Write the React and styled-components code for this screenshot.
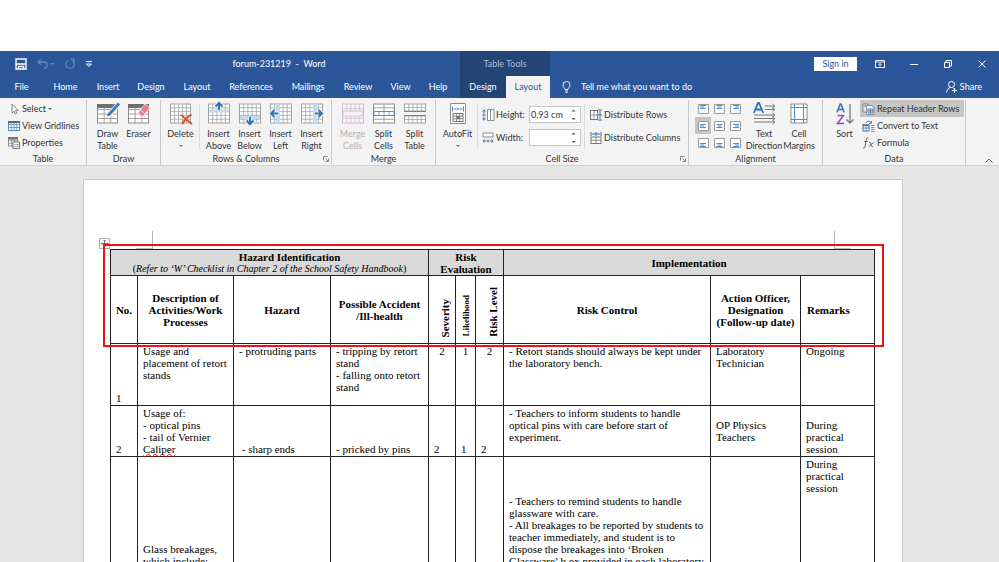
import styled, { createGlobalStyle, css } from "styled-components";

const GlobalStyle = createGlobalStyle`
  * {
    box-sizing: border-box;
  }
  body {
    margin: 0;
    background: #ffffff;
    font-family: Lato, "Open Sans", sans-serif;
    font-size: 9px;
    line-height: 12px;
    color: #333333;
  }
  button {
    border: 0;
    padding: 0;
    background: none;
    font: inherit;
    color: inherit;
    white-space: nowrap;
  }
  svg {
    display: block;
    flex: none;
    overflow: visible;
  }
`;

const Container = styled.div`
  display: flex;
  flex-direction: column;
  height: 100vh;
  padding-top: 51px;
  overflow: hidden;
`;

/* title bar and tabs */
const Bar = styled.header`
  display: grid;
  grid-template-columns: 460px 90px 1fr;
  flex: none;
  height: ${(props) => props.$height}px;
  background: #2b579a;
  color: #ffffff;
`;
const TitleLeft = styled.div`
  display: flex;
  align-items: center;
`;
const QuickAccess = styled.div`
  display: flex;
  align-items: center;
  gap: 10px;
  width: 98px;
  padding-left: 15px;
`;
const Title = styled.div`
  flex: 1;
  text-align: center;
  white-space: pre;
`;
const ContextTitle = styled.div`
  display: flex;
  align-items: center;
  justify-content: center;
  background: #244475;
  color: #a9bcda;
`;
const TitleRight = styled.div`
  display: flex;
  align-items: center;
  justify-content: flex-end;
`;
const SignIn = styled.button`
  width: 43px;
  height: 14px;
  margin-right: 6px;
  background: #ffffff;
  color: #2b579a;
`;
const WindowButton = styled.button`
  display: flex;
  align-items: center;
  justify-content: center;
  width: 34px;
  height: 24px;
`;
const Tabs = styled.nav`
  display: flex;
`;
const Tab = styled.button`
  width: ${(props) => props.$width}px;
  text-align: center;
  ${(props) =>
    props.$context &&
    css`
      background: #244475;
    `}
  ${(props) =>
    props.$active &&
    css`
      background: #f3f3f3;
      color: #2b579a;
    `}
`;
const TabsRight = styled.div`
  display: flex;
  align-items: center;
  justify-content: space-between;
  padding: 0 17px 0 12px;
`;
const BarButton = styled.button`
  display: flex;
  align-items: center;
  gap: ${(props) => props.$gap}px;
`;

/* ribbon */
const Ribbon = styled.div`
  display: flex;
  flex: none;
  height: 68px;
  padding: 2px 0 0;
  background: #f3f3f3;
  border-bottom: 1px solid #d2d2d2;
`;
const Group = styled.section`
  display: flex;
  flex-direction: column;
  justify-content: space-between;
  width: ${(props) => props.$width}px;
  border-right: 1px solid #c8c8c8;
`;
const GroupBody = styled.div`
  display: flex;
  height: 52px;
  padding-left: ${(props) => props.$left}px;
`;
const GroupLabel = styled.div`
  display: flex;
  align-items: center;
  justify-content: center;
  height: 12px;
  position: relative;
`;
const Launcher = styled.button`
  position: absolute;
  right: 2px;
  top: 3px;
`;
const BigButton = styled.button`
  display: flex;
  flex-direction: column;
  align-items: center;
  width: ${(props) => props.$width || 31}px;
  padding-top: 3px;
  line-height: 12px;
  color: ${(props) => (props.disabled ? "#b1b1b1" : "#333333")};
`;
const BigLabel = styled.span`
  display: flex;
  flex-direction: column;
  align-items: center;
  margin-top: 3px;
`;
const Arrow = styled.span`
  width: 0;
  margin-top: 5px;
  border: 2px solid transparent;
  border-top-color: #777777;
  border-bottom: 0;
`;
const InnerLine = styled.div`
  width: 1px;
  height: 44px;
  margin: 4px ${(props) => props.$right}px 0 ${(props) => props.$left}px;
  background: #dcdcdc;
`;
const SmallColumn = styled.div`
  display: flex;
  flex-direction: column;
  padding-top: ${(props) => (props.$wide ? 3 : 0)}px;
`;
const SmallButton = styled.button`
  display: flex;
  align-items: center;
  gap: 2px;
  height: ${(props) => props.$height || 17}px;
  padding: 0 5px 0 2px;
  background: ${(props) => (props.$active ? "#c5c5c5" : "none")};
`;
const SmallArrow = styled.span`
  border: 2px solid transparent;
  border-top-color: #666666;
  border-bottom: 0;
`;
const Field = styled.div`
  display: grid;
  grid-template-columns: 13px 32px 52px;
  gap: 1px;
  align-items: center;
  height: 23px;
`;
const Spinner = styled.div`
  display: flex;
  align-items: center;
  height: 17px;
  padding-right: 4px;
  background: #ffffff;
  border: 1px solid #c6c6c6;
`;
const FieldInput = styled.input`
  flex: 1;
  min-width: 0;
  height: 15px;
  padding: 0 0 0 1px;
  border: 0;
  background: none;
  font: inherit;
  color: #333333;
`;
const AlignGrid = styled.div`
  display: grid;
  grid-template-columns: repeat(3, 16px);
  grid-auto-rows: 17px;
  width: 52px;
`;
const AlignButton = styled.button`
  display: flex;
  align-items: center;
  justify-content: center;
  background: ${(props) => (props.$active ? "#c5c5c5" : "none")};
`;
const RibbonEnd = styled.div`
  display: flex;
  flex: 1;
  align-items: flex-end;
  justify-content: flex-end;
  padding: 0 6px 2px 0;
`;

/* document */
const Workspace = styled.main`
  display: flex;
  flex: 1;
  min-height: 0;
  padding: 13px 96px 0 83px;
  background: #e6e6e6;
  overflow: hidden;
`;
const Page = styled.article`
  flex: 1;
  padding: 51px 27px 0 26px;
  border: 1px solid #c9c9c9;
  border-bottom: 0;
  background: #ffffff;
  font-family: "Liberation Serif", "Times New Roman", serif;
  font-size: 11px;
  line-height: 12px;
  color: #000000;
`;
const MarginMarks = styled.div`
  display: flex;
  justify-content: space-between;
  padding: 0 24px 0 26px;
`;
const Mark = styled.span`
  width: 17px;
  height: 18px;
  border: 0 solid #b5b5b5;
  border-bottom-width: 1px;
  ${(props) => (props.$side === "left" ? "border-right-width: 1px;" : "border-left-width: 1px;")}
`;
const TableArea = styled.div`
  position: relative;
`;
const MoveHandle = styled.span`
  position: absolute;
  left: -11px;
  top: -11px;
  border: 1px solid #b0b0b0;
  background: #ffffff;
`;
const Highlight = styled.div`
  position: absolute;
  left: -7px;
  right: -9px;
  top: -5px;
  height: 103px;
  border: 2px solid #ee1118;
  pointer-events: none;
`;
const Table = styled.table`
  width: 100%;
  table-layout: fixed;
  border-collapse: collapse;
`;
const Col = styled.col`
  width: ${(props) => (props.$width ? props.$width + "px" : "auto")};
`;
const Row = styled.tr`
  height: ${(props) => props.$height}px;
`;
const HeadCell = styled.th`
  padding: 0;
  border: 1px solid #222222;
  background: ${(props) => (props.$shaded ? "#d9d9d9" : "#ffffff")};
  text-align: ${(props) => props.$align || "center"};
  ${(props) => props.$align && "padding-left: 6px;"}
`;
const HeadTitle = styled.div`
  padding-left: 40px;
`;
const RefNote = styled.div`
  font-size: 10px;
  font-weight: normal;
`;
const SideCell = styled(HeadCell)`
  padding: 0 0 6px ${(props) => props.$left}px;
  vertical-align: bottom;
`;
const SideText = styled.span`
  display: inline-block;
  vertical-align: bottom;
  writing-mode: vertical-rl;
  rotate: 180deg;
  font-size: ${(props) => (props.$small ? 9 : 11)}px;
  white-space: nowrap;
`;
const Cell = styled.td`
  padding: 1px 0 1px ${(props) => (props.$align ? 0 : 5)}px;
  border: 1px solid #222222;
  vertical-align: ${(props) => props.$valign || "bottom"};
  text-align: ${(props) => props.$align || "left"};
  white-space: pre;
`;
const Misspelt = styled.span`
  text-decoration: underline wavy #e00000 1px;
  text-decoration-skip-ink: none;
  text-underline-offset: 0;
`;

const BLUE = "#2e75b6";
const GRAY = "#8c8c8c";

/* evenly divided cell grid */
function Cells({ x = 0, y = 0, w, h, cols, rows, stroke = "#a3a3a3", fill = "#fff" }) {
  let d = "";
  for (let i = 1; i < cols; i++) d += `M${x + (w * i) / cols} ${y}v${h}`;
  for (let i = 1; i < rows; i++) d += `M${x} ${y + (h * i) / rows}h${w}`;
  return (
    <g stroke={stroke} fill="none" strokeWidth="1">
      <rect x={x} y={y} width={w} height={h} fill={fill} />
      <path d={d} strokeWidth="0.8" />
    </g>
  );
}

function Icon({ w = 22, h = 22, children }) {
  return (
    <svg width={w} height={h} viewBox={`0 0 ${w} ${h}`} fill="none">
      {children}
    </svg>
  );
}

const DrawTableIcon = () => (
  <Icon>
    <Cells x={0.5} y={2} w={20} h={18} cols={3} rows={4} stroke={GRAY} />
    <path d="M0 1h21v4H0z" fill="#6f6f6f" />
    <path d="M12 12L21 2" stroke="#f3f3f3" strokeWidth="5" />
    <path d="M12 11.5L22 .5" stroke="#3a7cc2" strokeWidth="3" />
    <path d="M10 13.5l1-3.200 2.200 2z" fill="#2b5f9a" />
  </Icon>
);
const EraserIcon = () => (
  <Icon>
    <Cells x={0.5} y={2} w={20} h={18} cols={3} rows={4} stroke={GRAY} />
    <path d="M0 1h21v4H0z" fill="#6f6f6f" />
    <path d="M10.500 9.500L17 1l5 4-6.500 8h-3z" fill="#e8798f" stroke="#f3f3f3" strokeWidth="0.8" />
    <path d="M12.500 7l5 4" stroke="#fff" strokeWidth="0.8" />
  </Icon>
);
const DeleteIcon = () => (
  <Icon>
    <Cells x={0.5} y={1} w={20} h={19} cols={5} rows={5} />
    <path d="M11 12c3 2 7 6 11 9M21.500 11.500c-4 2-7 6-9.500 9.500" stroke="#d9532c" strokeWidth="2" />
  </Icon>
);
const InsertIcon = ({ dir }) => {
  const bands = {
    up: "M1 6.500h20v3H1z",
    down: "M1 13h20v3H1z",
    left: "M6 1h4v19H6z",
    right: "M12 1h4v19h-4z",
  };
  const arrows = {
    up: "M11 7V0M7.500 3.500L11 0l3.500 3.500",
    down: "M11 14v7M7.500 17.500L11 21l3.500-3.500",
    left: "M8 10.500H1M4.500 7L1 10.500 4.500 14",
    right: "M14 10.500h7M17.500 7l3.500 3.500-3.500 3.500",
  };
  return (
    <Icon>
      <Cells x={0.5} y={1} w={21} h={19} cols={5} rows={5} />
      <path d={bands[dir]} fill="#c3daee" />
      <path d={arrows[dir]} stroke="#f3f3f3" strokeWidth="4" />
      <path d={arrows[dir]} stroke={BLUE} strokeWidth="2" />
    </Icon>
  );
};
const MergeCellsIcon = () => (
  <Icon>
    <Cells x={0.5} y={1} w={21} h={19} cols={5} rows={4} stroke="#cdbfcb" fill="#faf5f9" />
    <path d="M1 8h20v5H1z" fill="#f7eff6" stroke="#cdbfcb" strokeWidth="0.8" />
  </Icon>
);
const SplitCellsIcon = () => (
  <Icon>
    <Cells x={0.5} y={1} w={21} h={19} cols={2} rows={5} stroke={GRAY} />
    <Cells x={1} y={8.500} w={20} h={4} cols={4} rows={1} stroke="#4a90d0" />
  </Icon>
);
const SplitTableIcon = () => (
  <Icon>
    <Cells x={0.5} y={1} w={21} h={7} cols={5} rows={2} />
    <Cells x={0.5} y={13} w={21} h={7} cols={5} rows={2} />
    <path d="M0 8.500h22M0 12.500h22" stroke="#4a90d0" />
  </Icon>
);
const AutoFitIcon = () => (
  <Icon w={18} h={22}>
    <path d="M1.500 .5h15v20h-15z" fill="#fff" stroke={GRAY} />
    <path d="M3.500 3.500v5M14.500 3.500v5M4.500 6h3M13.500 6h-3" stroke="#4a90d0" />
    <path d="M7.500 4.500l3 3M10.500 4.500l-3 3" stroke={GRAY} strokeWidth="0.8" />
    <Cells x={4} y={10.500} w={10} h={8} cols={3} rows={3} stroke="#777" />
    <path d="M7.500 13h3.500v3H7.500z" fill="#777" />
  </Icon>
);
const TextDirectionIcon = () => (
  <Icon w={23} h={22}>
    <path d="M12 3h9M12 6.500h9M1 12h20M1 15.500h20M1 19h20" stroke="#777" />
    <path d="M19.500 1l2.500 2-2.500 2M19.500 4.500l2.500 2-2.500 2M19.500 10l2.500 2-2.500 2M19.500 13.500l2.500 2-2.500 2M19.500 17l2.500 2-2.500 2" stroke="#777" />
    <path d="M.8 10L5 0h1l4.200 10M2.500 6.500h6" stroke={BLUE} strokeWidth="1.800" />
  </Icon>
);
const CellMarginsIcon = () => (
  <Icon w={18} h={22}>
    <path d="M1 1h16v19H1z" fill="#fff" stroke={GRAY} />
    <path d="M4.500 1v19M13.500 1v19M1 4.500h16M1 16.500h16" stroke="#4a90d0" />
  </Icon>
);
const SortIcon = () => (
  <Icon w={18} h={22}>
    <path d="M1 9.500L4.200 1h.8l3.200 8.500M2.300 6.500h4.700" stroke={BLUE} strokeWidth="1.500" />
    <path d="M1.500 12.500h6L1.500 20.500h6.500" stroke="#8e4db5" strokeWidth="1.500" />
    <path d="M14 1v19M10.500 16.500L14 20l3.500-3.500" stroke="#777" strokeWidth="1.300" />
  </Icon>
);
const CursorIcon = () => (
  <Icon w={12} h={12}>
    <path d="M4 1v9l2-1.800L7.300 11l1.500-.7L7.500 7.500H10z" fill="#fff" stroke="#666" strokeWidth="0.800" />
  </Icon>
);
const GridlinesIcon = () => (
  <Icon w={12} h={12}>
    <Cells x={0.5} y={1.500} w={11} h={9} cols={4} rows={3} stroke="#4a90d0" />
    <path d="M0 1h12v2H0z" fill="#666" />
  </Icon>
);
const PropertiesIcon = () => (
  <Icon w={12} h={12}>
    <Cells x={0.5} y={1} w={9} h={8} cols={3} rows={3} stroke={GRAY} />
    <path d="M0 0h10v2.500H0z" fill="#777" />
    <path d="M5 5h6.500v6.500H5z" fill="#fff" stroke="#777" />
    <path d="M6.500 7.500h1M6.500 9.500h1" stroke={BLUE} />
    <path d="M8.500 7.500h2M8.500 9.500h2" stroke={GRAY} />
  </Icon>
);
const HeightIcon = () => (
  <Icon w={13} h={12}>
    <path d="M5.500 .5h6.500v11H5.500zM8.500 .5v11" fill="#fff" stroke={GRAY} />
    <path d="M2 4V1M.5 2.500L2 .8l1.500 1.700M2 8v3M.5 9.500L2 11.200l1.500-1.700" stroke={BLUE} />
    <path d="M1 5h2v2H1z" stroke="#777" strokeWidth="0.800" />
  </Icon>
);
const WidthIcon = () => (
  <Icon w={13} h={12}>
    <path d="M1 1h10v4H1z" fill="#fff" stroke={GRAY} />
    <path d="M4 9H1M2.500 7.300L.8 9l1.700 1.700M8 9h3M9.500 7.300L11.200 9l-1.700 1.700" stroke={BLUE} />
    <path d="M5 8h2v2H5z" stroke="#777" strokeWidth="0.800" />
  </Icon>
);
const DistRowsIcon = () => (
  <Icon w={12} h={12}>
    <Cells x={0.5} y={1.500} w={7} h={9} cols={2} rows={2} stroke="#777" />
    <path d="M8 1h4M8 6h4M8 11h4M10 2v8" stroke={BLUE} />
  </Icon>
);
const DistColsIcon = () => (
  <Icon w={12} h={12}>
    <Cells x={1} y={5} w={10} h={6.500} cols={2} rows={2} stroke="#777" />
    <path d="M1 0v4M6 0v4M11 0v4M2 2h8" stroke={BLUE} />
  </Icon>
);
const RepeatIcon = () => (
  <Icon w={13} h={12}>
    <path d="M1 1h5v8H1z" fill="#e8e8e8" stroke="#777" strokeWidth="0.800" />
    <path d="M4.500 2.500h5l2.500 2v7H4.500z" fill="#fff" stroke="#777" strokeWidth="0.800" />
    <path d="M6 6h5v4H6zM6 8h5M8.500 6v4M2 3h2" stroke={BLUE} strokeWidth="0.900" />
  </Icon>
);
const ConvertIcon = () => (
  <Icon w={13} h={12}>
    <Cells x={1} y={5} w={6} h={6} cols={2} rows={2} stroke={BLUE} />
    <path d="M.5 4.500h7v1.500h-7z" fill="#666" />
    <path d="M4 3c1-2.500 4-2.500 5 0M9.300 1v2.300H7" stroke={BLUE} />
    <path d="M9 5.500h3.500M9 7.500h3.500M9 9.500h3.500M9 11.500h3.500" stroke={GRAY} />
  </Icon>
);
const FormulaIcon = () => (
  <Icon w={13} h={12}>
    <path d="M6.500 1.200C5 .5 4.500 1.500 4.200 3L3 9.500c-.3 1.500-1 2-2 1.500M2.200 4.500h3.600M7 5.500c1.500-.7 1.500 0 2 2s.8 2.500 2 1.700M11.500 5.500L6.800 9.500" stroke="#555" strokeWidth="0.900" />
  </Icon>
);
const AlignIcon = ({ v, h }) => {
  const y = [1, 3, 5][v];
  const wide = [2, 2.500, 3][h];
  const narrow = [2, 3.500, 5][h];
  return (
    <Icon w={11} h={10}>
      <path d="M.5 .5h10v9H.5z" fill="#fff" stroke="#9a9a9a" />
      <path d={`M${wide} ${y + 0.5}h6M${narrow} ${y + 2}h4M${wide} ${y + 3.500}h6`} stroke="#4a90d0" />
    </Icon>
  );
};
const LauncherIcon = () => (
  <Icon w={6} h={6}>
    <path d="M.5 4.500v-4h4M2.500 2.500l3 3M5.500 2.500v3h-3" stroke="#777" strokeWidth="0.900" />
  </Icon>
);
const SpinArrows = () => (
  <Icon w={5} h={11}>
    <path d="M.5 2.500l2-2 2 2zM.5 9l2 2 2-2z" fill="#555" />
  </Icon>
);

const tabs = [
  ["File", 43],
  ["Home", 45],
  ["Insert", 40],
  ["Design", 46],
  ["Layout", 46],
  ["References", 62],
  ["Mailings", 52],
  ["Review", 48],
  ["View", 37],
  ["Help", 38],
];

const inserts = [
  ["up", "Above"],
  ["down", "Below"],
  ["left", "Left"],
  ["right", "Right"],
];

function Big({ icon, lines, width, arrow, disabled }) {
  return (
    <BigButton $width={width} disabled={disabled}>
      {icon}
      <BigLabel>
        {lines.map((line) => (
          <span key={line}>{line}</span>
        ))}
        {arrow && <Arrow />}
      </BigLabel>
    </BigButton>
  );
}

function RibbonGroup({ label, width, left, launcher, children }) {
  return (
    <Group $width={width}>
      <GroupBody $left={left}>{children}</GroupBody>
      <GroupLabel>
        {label}
        {launcher && (
          <Launcher aria-label={label + " settings"}>
            <LauncherIcon />
          </Launcher>
        )}
      </GroupLabel>
    </Group>
  );
}

function TitleBar() {
  return (
    <Bar $height={25}>
      <TitleLeft>
        <QuickAccess>
          <button aria-label="Save">
            <Icon w={12} h={12}>
              <path d="M1 1h10v10H1zM1 6h10M3.500 11V8.500h5V11" stroke="#fff" strokeWidth="1.400" />
            </Icon>
          </button>
          <button aria-label="Undo">
            <Icon w={18} h={12}>
              <path d="M4 1L1 4l3 3M1 4h6c4 0 4 6 0 6.500" stroke="#6484b8" strokeWidth="1.300" />
              <path d="M13.500 5h4l-2 2z" fill="#6484b8" />
            </Icon>
          </button>
          <button aria-label="Redo">
            <Icon w={10} h={12}>
              <path d="M3 2.500a4.200 4.200 0 1 0 4.500.3M5.500 1h3.500M9 1v3.500" stroke="#6484b8" strokeWidth="1.300" />
            </Icon>
          </button>
          <button aria-label="Customize toolbar">
            <Icon w={8} h={8}>
              <path d="M1 1.500h6M1.500 4l2.500 2.500L6.500 4z" stroke="#fff" />
            </Icon>
          </button>
        </QuickAccess>
        <Title>{"forum-231219  -  Word"}</Title>
      </TitleLeft>
      <ContextTitle>Table Tools</ContextTitle>
      <TitleRight>
        <SignIn>Sign in</SignIn>
        <WindowButton aria-label="Ribbon options">
          <Icon w={10} h={8}>
            <path d="M.5 .5h9v7h-9zM.5 2h9M5 6.500V3.500M3.500 5L5 3.500 6.500 5" stroke="#fff" strokeWidth="0.900" />
          </Icon>
        </WindowButton>
        <WindowButton aria-label="Minimize">
          <Icon w={8} h={8}>
            <path d="M0 4.500h8" stroke="#fff" />
          </Icon>
        </WindowButton>
        <WindowButton aria-label="Restore">
          <Icon w={8} h={8}>
            <path d="M.5 2.500h5v5h-5zM2 2.500V.5h5.500V6h-2" stroke="#fff" />
          </Icon>
        </WindowButton>
        <WindowButton aria-label="Close">
          <Icon w={8} h={8}>
            <path d="M.5 .5l7 7M7.500 .5l-7 7" stroke="#fff" />
          </Icon>
        </WindowButton>
      </TitleRight>
    </Bar>
  );
}

function TabBar() {
  return (
    <Bar $height={22}>
      <Tabs>
        {tabs.map(([name, width]) => (
          <Tab key={name} $width={width}>
            {name}
          </Tab>
        ))}
      </Tabs>
      <Tabs>
        <Tab $width={46} $context>
          Design
        </Tab>
        <Tab $width={44} $active>
          Layout
        </Tab>
      </Tabs>
      <TabsRight>
        <BarButton $gap={10}>
          <Icon w={9} h={12}>
            <path d="M3 8.500C3 7 1 6.500 1 4a3.500 3.500 0 0 1 7 0c0 2.500-2 3-2 4.500zM3 10h3M3.500 11.500h2" stroke="#fff" strokeWidth="0.900" />
          </Icon>
          Tell me what you want to do
        </BarButton>
        <BarButton $gap={3}>
          <Icon w={11} h={12}>
            <circle cx="5.500" cy="3.500" r="3" stroke="#fff" />
            <path d="M.5 11.500C1 8.500 2.500 7 4.500 6.500M6.500 6.500l1 1M8.500 7v5M6 9.500h5" stroke="#fff" />
          </Icon>
          Share
        </BarButton>
      </TabsRight>
    </Bar>
  );
}

function RibbonBar() {
  return (
    <Ribbon>
      <RibbonGroup label="Table" width={87} left={6}>
        <SmallColumn>
          <SmallButton>
            <CursorIcon />
            Select
            <SmallArrow />
          </SmallButton>
          <SmallButton>
            <GridlinesIcon />
            View Gridlines
          </SmallButton>
          <SmallButton>
            <PropertiesIcon />
            Properties
          </SmallButton>
        </SmallColumn>
      </RibbonGroup>
      <RibbonGroup label="Draw" width={74} left={5}>
        <Big icon={<DrawTableIcon />} lines={["Draw", "Table"]} />
        <Big icon={<EraserIcon />} lines={["Eraser"]} />
      </RibbonGroup>
      <RibbonGroup label={"Rows & Columns"} width={171} left={4} launcher>
        <Big icon={<DeleteIcon />} lines={["Delete"]} arrow />
        <InnerLine $left={3} $right={3} />
        {inserts.map(([dir, name]) => (
          <Big key={dir} icon={<InsertIcon dir={dir} />} lines={["Insert", name]} />
        ))}
      </RibbonGroup>
      <RibbonGroup label="Merge" width={104} left={5}>
        <Big icon={<MergeCellsIcon />} lines={["Merge", "Cells"]} disabled />
        <Big icon={<SplitCellsIcon />} lines={["Split", "Cells"]} />
        <Big icon={<SplitTableIcon />} lines={["Split", "Table"]} />
      </RibbonGroup>
      <RibbonGroup label="Cell Size" width={253} left={6} launcher>
        <Big icon={<AutoFitIcon />} lines={["AutoFit"]} arrow />
        <InnerLine $left={4} $right={4} />
        <SmallColumn $wide>
          <Field>
            <HeightIcon />
            <label htmlFor="cell-height">Height:</label>
            <Spinner>
              <FieldInput id="cell-height" defaultValue="0.93 cm" />
              <SpinArrows />
            </Spinner>
          </Field>
          <Field>
            <WidthIcon />
            <label htmlFor="cell-width">Width:</label>
            <Spinner>
              <FieldInput id="cell-width" />
              <SpinArrows />
            </Spinner>
          </Field>
        </SmallColumn>
        <InnerLine $left={3} $right={3} />
        <SmallColumn $wide>
          <SmallButton $height={23}>
            <DistRowsIcon />
            Distribute Rows
          </SmallButton>
          <SmallButton $height={23}>
            <DistColsIcon />
            Distribute Columns
          </SmallButton>
        </SmallColumn>
      </RibbonGroup>
      <RibbonGroup label="Alignment" width={134} left={6}>
        <AlignGrid>
          {[0, 1, 2].map((v) =>
            [0, 1, 2].map((h) => (
              <AlignButton key={`${v}-${h}`} $active={v === 1 && h === 0} aria-label={`Align ${v} ${h}`}>
                <AlignIcon v={v} h={h} />
              </AlignButton>
            ))
          )}
        </AlignGrid>
        <Big icon={<TextDirectionIcon />} lines={["Text", "Direction"]} width={34} />
        <Big icon={<CellMarginsIcon />} lines={["Cell", "Margins"]} width={36} />
      </RibbonGroup>
      <RibbonGroup label="Data" width={143} left={6}>
        <Big icon={<SortIcon />} lines={["Sort"]} />
        <SmallColumn>
          <SmallButton $active>
            <RepeatIcon />
            Repeat Header Rows
          </SmallButton>
          <SmallButton>
            <ConvertIcon />
            Convert to Text
          </SmallButton>
          <SmallButton>
            <FormulaIcon />
            Formula
          </SmallButton>
        </SmallColumn>
      </RibbonGroup>
      <RibbonEnd>
        <button aria-label="Collapse ribbon">
          <Icon w={8} h={5}>
            <path d="M.5 4.500L4 1l3.500 3.500" stroke="#666" />
          </Icon>
        </button>
      </RibbonEnd>
    </Ribbon>
  );
}

function RiskTable() {
  return (
    <Table>
      <colgroup>
        <Col $width={27} />
        <Col $width={96} />
        <Col $width={97} />
        <Col $width={98} />
        <Col $width={27} />
        <Col $width={20} />
        <Col $width={28} />
        <Col />
        <Col $width={90} />
        <Col $width={74} />
      </colgroup>
      <thead>
        <Row $height={26}>
          <HeadCell colSpan={4} $shaded>
            <HeadTitle>Hazard Identification</HeadTitle>
            <RefNote>
              (<i>Refer to ‘W’ Checklist in Chapter 2 of the School Safety Handbook</i>)
            </RefNote>
          </HeadCell>
          <HeadCell colSpan={3} $shaded>
            Risk
            <br />
            Evaluation
          </HeadCell>
          <HeadCell colSpan={3} $shaded>
            Implementation
          </HeadCell>
        </Row>
        <Row $height={68}>
          <HeadCell>No.</HeadCell>
          <HeadCell>
            Description of
            <br />
            Activities/Work
            <br />
            Processes
          </HeadCell>
          <HeadCell>Hazard</HeadCell>
          <HeadCell>
            Possible Accident
            <br />
            /Ill-health
          </HeadCell>
          <SideCell $left={6}>
            <SideText>Severity</SideText>
          </SideCell>
          <SideCell $left={0}>
            <SideText $small>Likelihood</SideText>
          </SideCell>
          <SideCell $left={6}>
            <SideText>Risk Level</SideText>
          </SideCell>
          <HeadCell>Risk Control</HeadCell>
          <HeadCell>
            Action Officer,
            <br />
            Designation
            <br />
            (Follow-up date)
          </HeadCell>
          <HeadCell $align="left">Remarks</HeadCell>
        </Row>
      </thead>
      <tbody>
        <Row $height={62}>
          <Cell>1</Cell>
          <Cell $valign="top">{"Usage and\nplacement of retort\nstands"}</Cell>
          <Cell $valign="top">- protruding parts</Cell>
          <Cell $valign="top">{"- tripping by retort\nstand\n- falling onto retort\nstand"}</Cell>
          <Cell $valign="top" $align="center">2</Cell>
          <Cell $valign="top" $align="center">1</Cell>
          <Cell $valign="top" $align="center">2</Cell>
          <Cell $valign="top">{"- Retort stands should always be kept under\nthe laboratory bench."}</Cell>
          <Cell $valign="top">{"Laboratory\nTechnician"}</Cell>
          <Cell $valign="top">Ongoing</Cell>
        </Row>
        <Row $height={51}>
          <Cell>2</Cell>
          <Cell>
            {"Usage of:\n- optical pins\n- tail of Vernier\n"}
            <Misspelt>Caliper</Misspelt>
          </Cell>
          <Cell>{" - sharp ends"}</Cell>
          <Cell>- pricked by pins</Cell>
          <Cell>2</Cell>
          <Cell>1</Cell>
          <Cell>2</Cell>
          <Cell $valign="top">{"- Teachers to inform students to handle\noptical pins with care before start of\nexperiment."}</Cell>
          <Cell $valign="middle">{"OP Physics\nTeachers"}</Cell>
          <Cell>{"During\npractical\nsession"}</Cell>
        </Row>
        <Row $height={112}>
          <Cell />
          <Cell>{"Glass breakages,\nwhich include:"}</Cell>
          <Cell />
          <Cell />
          <Cell />
          <Cell />
          <Cell />
          <Cell>
            {"- Teachers to remind students to handle\nglassware with care.\n- All breakages to be reported by students to\nteacher immediately, and student is to\ndispose the breakages into ‘Broken\nGlassware’ b ox provided in each laboratory."}
          </Cell>
          <Cell />
          <Cell $valign="top">{"During\npractical\nsession"}</Cell>
        </Row>
      </tbody>
    </Table>
  );
}

export default function App() {
  return (
    <Container>
      <GlobalStyle />
      <TitleBar />
      <TabBar />
      <RibbonBar />
      <Workspace>
        <Page>
          <MarginMarks>
            <Mark $side="left" />
            <Mark $side="right" />
          </MarginMarks>
          <TableArea>
            <MoveHandle>
              <Icon w={9} h={9}>
                <path d="M4.500 1v7M1 4.500h7M3.500 2l1-1 1 1M3.500 7l1 1 1-1M2 3.500l-1 1 1 1M7 3.500l1 1-1 1" stroke="#555" strokeWidth="0.800" />
              </Icon>
            </MoveHandle>
            <RiskTable />
            <Highlight />
          </TableArea>
        </Page>
      </Workspace>
    </Container>
  );
}
